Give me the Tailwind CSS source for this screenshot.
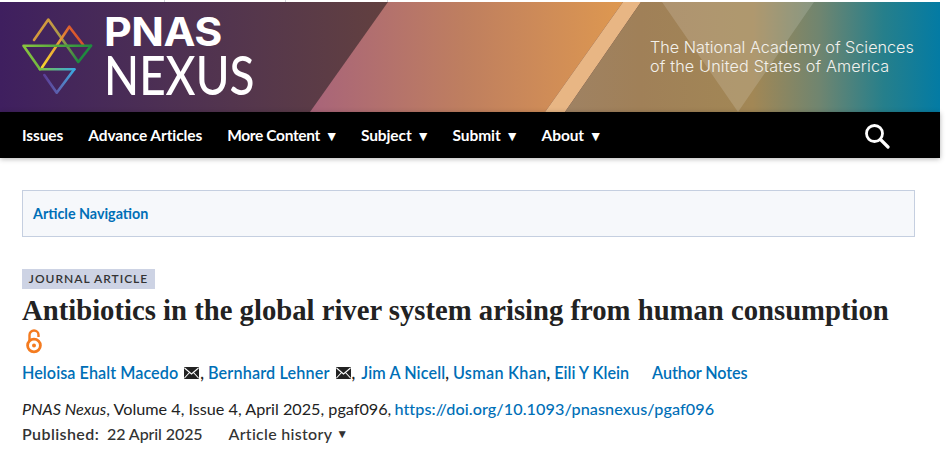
<!DOCTYPE html>
<html lang="en">

<head>
    <meta charset="UTF-8" />
    <meta name="viewport" content="width=device-width, initial-scale=1.0" />
    <title>Antibiotics in the global river system | PNAS Nexus</title>
    <script src="https://cdn.jsdelivr.net/npm/@tailwindcss/browser@4"></script>
</head>

<body class="bg-white font-['Lato',sans-serif] text-[#222] overflow-hidden">

    <div class="w-[940px]">
        <!-- top strip -->
        <div class="h-[2px] flex">
            <div class="w-[165px] border-r border-gray-300"></div>
            <div class="w-[121px] border-r border-gray-300"></div>
            <div class="w-[102px] border-r border-gray-300"></div>
        </div>

        <!-- banner -->
        <header class="relative h-[110px] overflow-hidden bg-gradient-to-r from-[#3f1f5f] to-[#62403f] to-[41%]">
            <svg class="absolute inset-0" width="940" height="110" viewBox="0 2 940 110">
                <defs>
                    <linearGradient id="warm" gradientUnits="userSpaceOnUse" x1="310" y1="0" x2="623" y2="0">
                        <stop offset="0" stop-color="#a8647a" />
                        <stop offset="0.5" stop-color="#bf7f5f" />
                        <stop offset="1" stop-color="#de9850" />
                    </linearGradient>
                    <linearGradient id="tail" gradientUnits="userSpaceOnUse" x1="565" y1="0" x2="940" y2="0">
                        <stop offset="0" stop-color="#9f8263" />
                        <stop offset="0.2" stop-color="#a08058" />
                        <stop offset="0.5" stop-color="#a28755" />
                        <stop offset="0.68" stop-color="#6f8570" />
                        <stop offset="0.85" stop-color="#267f8b" />
                        <stop offset="1" stop-color="#037ba4" />
                    </linearGradient>
                    <linearGradient id="s1" gradientUnits="userSpaceOnUse" x1="34" y1="40" x2="78" y2="62">
                        <stop offset="0" stop-color="#d69a3c" />
                        <stop offset="0.45" stop-color="#a89a4c" />
                        <stop offset="1" stop-color="#1f8a3f" />
                    </linearGradient>
                    <linearGradient id="s2" gradientUnits="userSpaceOnUse" x1="22" y1="0" x2="91" y2="0">
                        <stop offset="0" stop-color="#8cc63f" />
                        <stop offset="1" stop-color="#1f8a3f" />
                    </linearGradient>
                    <linearGradient id="s3" gradientUnits="userSpaceOnUse" x1="42" y1="67" x2="83" y2="45">
                        <stop offset="0" stop-color="#f6d32d" />
                        <stop offset="0.6" stop-color="#e89a3a" />
                        <stop offset="1" stop-color="#d9512c" />
                    </linearGradient>
                    <linearGradient id="s4" gradientUnits="userSpaceOnUse" x1="40" y1="0" x2="74" y2="0">
                        <stop offset="0" stop-color="#7ac143" />
                        <stop offset="1" stop-color="#3ba9e0" />
                    </linearGradient>
                    <linearGradient id="s5" gradientUnits="userSpaceOnUse" x1="74" y1="70" x2="44" y2="76">
                        <stop offset="0" stop-color="#3ba9e0" />
                        <stop offset="0.55" stop-color="#5a6fb8" />
                        <stop offset="1" stop-color="#5b3d96" />
                    </linearGradient>
                </defs>
                <polygon points="388,2 623,2 545,112 310,112" fill="url(#warm)" />
                <polygon points="623,2 641,2 565,112 545,112" fill="#e8b684" />
                <polygon points="641,2 940,2 940,112 565,112" fill="url(#tail)" />
                <polygon points="662,2 814,2 738,112" fill="#fff" fill-opacity="0.15" />
                <g fill="none" stroke-width="2.6" stroke-linecap="round" stroke-linejoin="round">
                    <polyline points="34,40 48.3,19.5 78.3,62 91,45.7" stroke="url(#s1)" />
                    <polyline points="42,67.5 69.3,26.7 83.3,45" stroke="url(#s3)" />
                    <polyline points="91,45.7 23.5,45.7 40,69.3" stroke="url(#s2)" />
                    <line x1="40" y1="69.3" x2="74.3" y2="69.3" stroke="url(#s4)" />
                    <polyline points="74.3,69.3 56.7,92.7 44.3,75" stroke="url(#s5)" />
                </g>
            </svg>

            <div class="relative h-full flex justify-between">
                <div class="ml-[104px] mt-[11px] text-white leading-none">
                    <div class="font-['Inter',sans-serif] font-bold text-[39px] h-[38px] leading-[38px] tracking-[-0.5px] origin-left scale-x-[1.1]">PNAS</div>
                    <div class="font-['Lato',sans-serif] font-medium text-[54px] h-[48px] leading-[48px] origin-left scale-x-[.85]">NEXUS</div>
                </div>
                <div class="mr-[25px] mt-[36px] font-['Inter',sans-serif] font-light text-[16.2px] leading-[19px] text-[#f3f1ec] w-[265px] whitespace-nowrap">
                    <div>The National Academy of Sciences</div>
                    <div class="tracking-[0.15px]">of the United States of America</div>
                </div>
            </div>
        </header>

        <!-- main nav -->
        <nav class="h-[46px] bg-black text-white flex items-center pl-[22px] pr-[50px] pt-[1px] shadow-[0_1px_5px_rgba(0,0,0,0.3)] font-bold text-[15.5px] tracking-[-0.1px] relative">
            <a class="mr-[25px]">Issues</a>
            <a class="mr-[25px]">Advance Articles</a>
            <a class="mr-[25px] flex items-center gap-[7px] tracking-[-0.35px]">More Content <span class="w-[9px] flex justify-center text-[14px] leading-none">▼</span></a>
            <a class="mr-[25px] flex items-center gap-[7px]">Subject <span class="w-[9px] flex justify-center text-[14px] leading-none">▼</span></a>
            <a class="mr-[25px] flex items-center gap-[7px]">Submit <span class="w-[9px] flex justify-center text-[14px] leading-none">▼</span></a>
            <a class="flex items-center gap-[7px]">About <span class="w-[9px] flex justify-center text-[14px] leading-none">▼</span></a>
            <svg class="ml-auto" width="26" height="26" viewBox="0 0 26 26" fill="none" stroke="#fff">
                <circle cx="10.5" cy="10.5" r="8" stroke-width="2.8" />
                <line x1="16.5" y1="16.5" x2="24" y2="24" stroke-width="3.2" stroke-linecap="round" />
            </svg>
        </nav>

        <main class="pl-[22px] pr-[25px]">
            <div class="mt-[32px] h-[47px] border border-[#c5cfe0] bg-[#f6f8fb] flex items-center pl-[10px] font-bold text-[14.3px] text-[#006fb7]">
                Article Navigation
            </div>

            <div class="mt-[32px] inline-block align-top h-[20px] w-[133px] bg-[#cdd3e4] text-center text-[12px] leading-[20px] font-semibold tracking-[1px] text-[#333]">JOURNAL ARTICLE</div>

            <h1 class="font-['Liberation_Serif',serif] font-bold text-[28.7px] leading-[40px] pt-[1px] text-[#222] whitespace-nowrap">Antibiotics in the global river system arising from human consumption</h1>

            <svg class="block ml-[3px] mt-[-2px]" width="18" height="26" viewBox="0 0 18 26" fill="none" stroke="#f47b20">
                <path d="M4.5 13 V7 a4.5 4.5 0 0 1 9 0 V9" stroke-width="2.4" />
                <circle cx="9" cy="17.5" r="6.4" stroke-width="2.8" />
                <circle cx="9" cy="17.5" r="2" fill="#f47b20" stroke="none" />
            </svg>

            <div class="mt-[7px] h-[24px] flex items-center text-[16.2px] font-semibold text-[#006fb7] whitespace-nowrap">
                <a class="tracking-[0.05px]">Heloisa Ehalt Macedo</a>
                <svg class="ml-[6px]" width="15" height="12" viewBox="0 0 15 12">
                    <rect width="15" height="12" rx="1" fill="#222" />
                    <path d="M0.5 1 L7.5 7 L14.5 1 M0.5 11 L5.5 5.5 M14.5 11 L9.5 5.5" stroke="#fff" stroke-width="1.1" fill="none" />
                </svg>
                <span class="text-[#222] ml-[1px]">,</span>
                <a class="ml-[4px] tracking-[0.15px]">Bernhard Lehner</a>
                <svg class="ml-[6px]" width="15" height="12" viewBox="0 0 15 12">
                    <rect width="15" height="12" rx="1" fill="#222" />
                    <path d="M0.5 1 L7.5 7 L14.5 1 M0.5 11 L5.5 5.5 M14.5 11 L9.5 5.5" stroke="#fff" stroke-width="1.1" fill="none" />
                </svg>
                <span class="text-[#222] ml-[1px]">,</span>
                <a class="ml-[6px] tracking-[0.1px]">Jim A Nicell</a><span class="text-[#222]">,</span>
                <a class="ml-[4px] tracking-[0.3px]">Usman Khan</a><span class="text-[#222]">,</span>
                <a class="ml-[4px]">Eili Y Klein</a>
                <a class="ml-[23px] tracking-[-0.1px]">Author Notes</a>
            </div>

            <div class="mt-[12px] text-[16.2px] leading-[24px] whitespace-nowrap">
                <em>PNAS Nexus</em>, Volume 4, Issue 4, April 2025, pgaf096, <a class="text-[#006fb7] font-medium -ml-[1px] tracking-[0.08px]">https://doi.org/10.1093/pnasnexus/pgaf096</a>
            </div>

            <div class="mt-[1px] flex items-center text-[16px] leading-[24px] font-medium whitespace-nowrap text-[#333]">
                <span class="font-semibold tracking-[0.4px]">Published:</span>
                <span class="ml-[8px] tracking-[-0.1px]">22 April 2025</span>
                <span class="ml-[26px] tracking-[0.3px]">Article history</span>
                <span class="ml-[4px] text-[12px]">▼</span>
            </div>
        </main>
    </div>

</body>

</html>
